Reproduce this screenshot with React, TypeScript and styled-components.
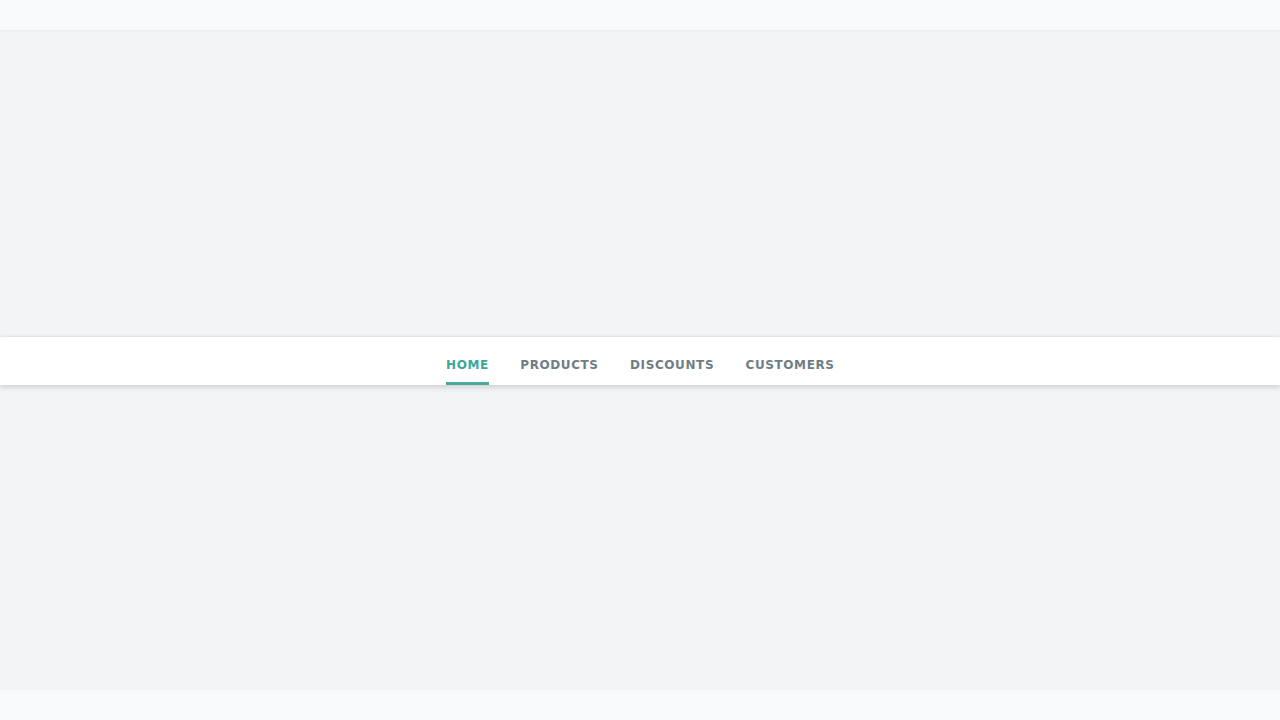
import styled, { createGlobalStyle } from 'styled-components';

const GlobalStyle = createGlobalStyle`
  html, body {
    margin: 0;
    padding: 0;
    background: #f9fafb;
    font-family: 'DejaVu Sans', 'Liberation Sans', sans-serif;
  }
`;

const NAV_ITEMS = ['Home', 'Products', 'Discounts', 'Customers'];

const App = () => {
  const active = 'Home';

  return (
    <>
      <GlobalStyle />
      <Page>
        <TopBar />
        <Main>
          <NavBar>
            <NavList>
              {NAV_ITEMS.map(item => (
                <NavItem key={item} $active={item === active}>
                  {item}
                </NavItem>
              ))}
            </NavList>
          </NavBar>
        </Main>
        <Footer />
      </Page>
    </>
  );
};

export default App;

const Page = styled.div`
  display: flex;
  flex-direction: column;
  width: 100%;
  height: 720px;
  background: #f9fafb;
`;

const TopBar = styled.header`
  height: 30px;
  flex-shrink: 0;
  background: #f9fafb;
  position: relative;
  z-index: 1;
  box-shadow: 0 1px 2px rgba(0, 0, 0, 0.04);
`;

const Main = styled.main`
  display: flex;
  flex-direction: column;
  justify-content: center;
  flex: 1;
  background: #f3f4f6;
`;

const NavBar = styled.nav`
  display: flex;
  justify-content: center;
  height: 48px;
  margin-top: 2px;
  background: #ffffff;
  box-shadow: 0 2px 6px rgba(0, 0, 0, 0.16), 0 -1px 3px rgba(0, 0, 0, 0.04);
`;

const NavList = styled.ul`
  display: flex;
  gap: 32px;
  margin: 0;
  padding: 0;
  list-style: none;
`;

const NavItem = styled.li<{ $active: boolean }>`
  display: flex;
  align-items: center;
  box-sizing: border-box;
  height: 48px;
  padding-top: 11px;
  margin-right: -0.6px;

  font-size: 12px;
  font-weight: 700;
  letter-spacing: 0.6px;
  text-transform: uppercase;
  color: ${props => (props.$active ? '#38a89d' : '#6f7d84')};
  border-bottom: 3px solid ${props => (props.$active ? '#4aa99b' : 'transparent')};
  cursor: pointer;
`;

const Footer = styled.footer`
  height: 30px;
  flex-shrink: 0;
  background: #f9fafb;
`;
